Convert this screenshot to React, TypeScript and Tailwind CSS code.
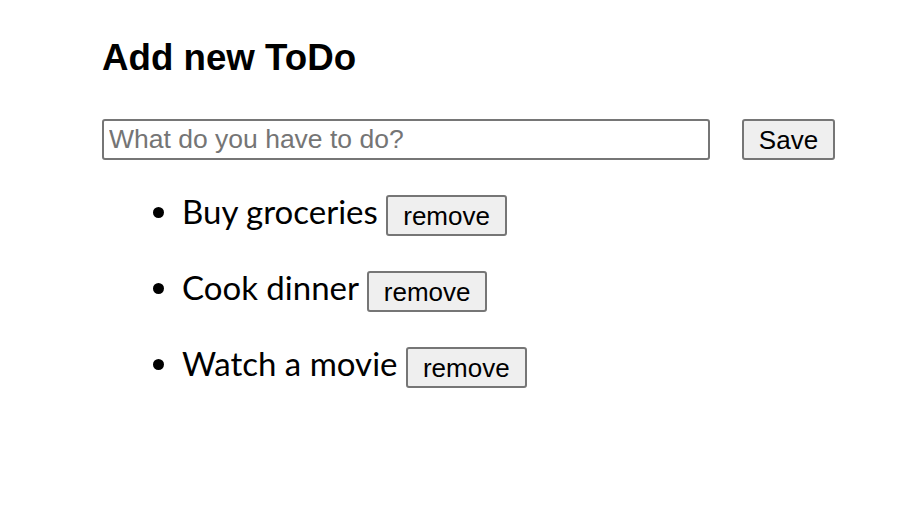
import React, { useState } from "react";

const initialTodos = ["Buy groceries", "Cook dinner", "Watch a movie"];

export default function App() {
  const [todos, setTodos] = useState<string[]>(initialTodos);
  const [text, setText] = useState("");

  const save = () => {
    if (!text.trim()) return;
    setTodos([...todos, text.trim()]);
    setText("");
  };

  return (
    <div className="min-h-[530px] bg-white pl-[102px] pt-[36px] text-black font-['Liberation_Sans',Arial,sans-serif]">
      <h1 className="text-[36.7px] font-bold leading-[44px]">Add new ToDo</h1>

      {/* input row */}
      <div className="mt-[39px] flex items-center gap-[32px]">
        <input
          value={text}
          onChange={(e) => setText(e.target.value)}
          placeholder="What do you have to do?"
          className="h-[41px] w-[608px] rounded-[3px] border-2 border-[#767676] px-[5px] text-[26.5px] placeholder:text-[#757575] outline-none"
        />
        <button
          onClick={save}
          className="h-[41px] w-[93px] rounded-[3px] border-2 border-[#767676] bg-[#efefef] text-[26px]"
        >
          Save
        </button>
      </div>

      {/* todo list */}
      <ul className="mt-[35px] list-disc pl-[80px] font-['Lato',sans-serif] text-[33px]">
        {todos.map((t, i) => (
          <li key={i} className="mb-[35px] h-[41px] leading-[32px]">
            {t}{" "}
            <button
              onClick={() => setTodos(todos.filter((_, j) => j !== i))}
              className="inline-flex h-[41px] items-center rounded-[3px] border-2 border-[#767676] bg-[#efefef] px-[15px] align-top font-['Liberation_Sans',Arial,sans-serif] text-[26px] leading-none"
            >
              remove
            </button>
          </li>
        ))}
      </ul>
    </div>
  );
}
